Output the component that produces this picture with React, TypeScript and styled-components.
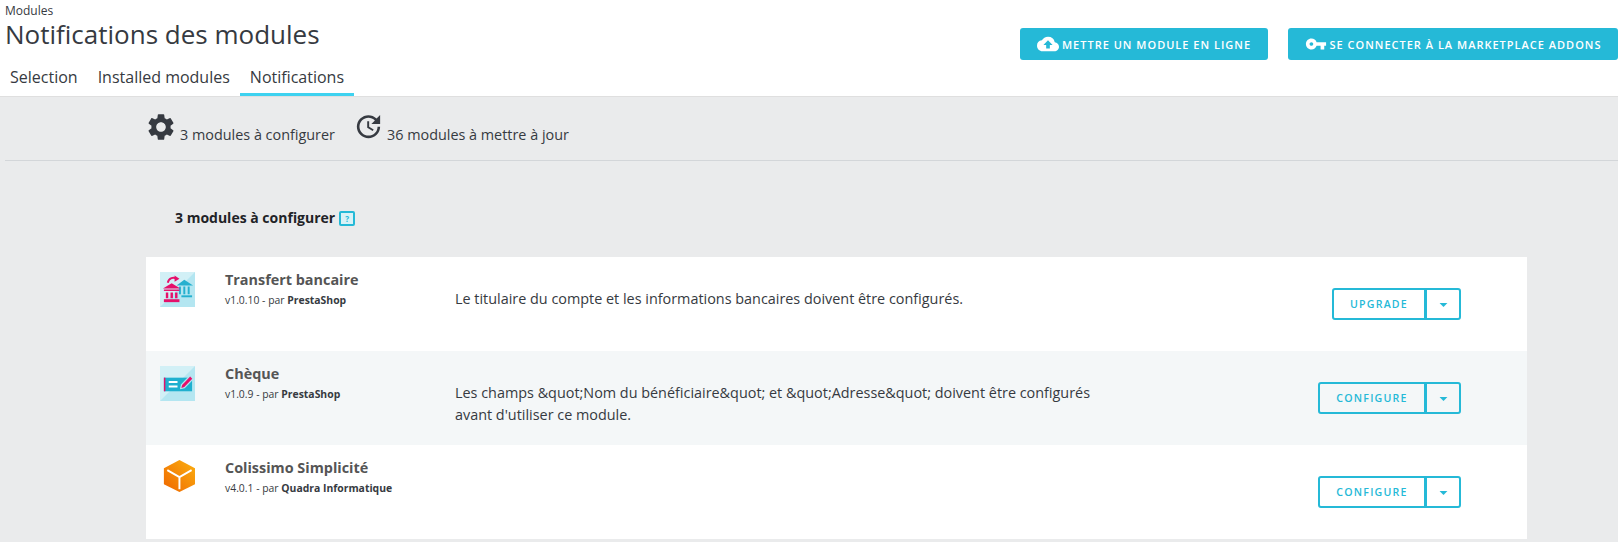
import React from "react";
import styled, { createGlobalStyle } from "styled-components";
import { MdCloudUpload, MdVpnKey, MdSettings, MdUpdate, MdArrowDropDown } from "react-icons/md";

const Global = createGlobalStyle`
  html, body { margin: 0; padding: 0; background: #eaebec; }
  body { font-family: "Open Sans", "Liberation Sans", sans-serif; color: #363a41; overflow: hidden; }
  * { box-sizing: border-box; }
`;

const Page = styled.div`
  width: 1618px;
  height: 542px;
  overflow: hidden;
`;

const Header = styled.header`
  height: 97px;
  background: #fff;
  border-bottom: 1px solid #dfdfdf;
  display: flex;
  justify-content: space-between;
`;

const HeaderLeft = styled.div`
  padding: 5px 0 0 5px;
  display: flex;
  flex-direction: column;
`;

const Crumb = styled.div`
  font-size: 12px;
  line-height: 12px;
  color: #363a41;
`;

const Title = styled.h1`
  margin: 0;
  font-size: 26px;
  line-height: 34px;
  font-weight: 400;
  color: #363a41;
`;

const Tabs = styled.nav`
  display: flex;
  margin: 8px 0 0 -5px;
`;

const Tab = styled.a<{ $active?: boolean }>`
  height: 37px;
  padding: 7px 10px 0;
  font-size: 16px;
  line-height: 22px;
  color: #363a41;
  border-bottom: 3px solid ${(p) => (p.$active ? "#3ed2f0" : "transparent")};
`;

const HeaderActions = styled.div`
  display: flex;
  gap: 20px;
  padding-top: 28px;
`;

const PrimaryButton = styled.button<{ $w: number }>`
  width: ${(p) => p.$w}px;
  height: 32px;
  border: 0;
  border-radius: 3px;
  background: #25b9d7;
  color: #fff;
  font-family: inherit;
  font-size: 11px;
  font-weight: 600;
  letter-spacing: 1px;
  text-transform: uppercase;
  display: flex;
  align-items: center;
  justify-content: center;
  gap: 3px;
  padding: 0;
  white-space: nowrap;
`;

const Summary = styled.div`
  margin-left: 5px;
  height: 64px;
  border-bottom: 1px solid #d3d6d9;
  padding: 14px 0 0 140px;
  display: flex;
  gap: 18px;
`;

const SummaryItem = styled.div`
  display: flex;
  align-items: flex-start;
  gap: 3px;
  font-size: 14.4px;
  color: #363a41;
`;

const SummaryLabel = styled.span`
  line-height: 20px;
  margin-top: 14px;
`;

const SectionTitle = styled.div`
  padding: 47px 0 0 175px;
  height: 96px;
  display: flex;
  align-items: flex-start;
  gap: 4px;
  font-size: 14px;
  font-weight: 700;
  line-height: 20px;
  color: #1f2327;
`;

const HelpBox = styled.span`
  width: 16px;
  height: 15px;
  margin-top: 3px;
  border: 2px solid #25b9d7;
  border-radius: 2px;
  background: #d9f2f7;
  color: #25b9d7;
  font-size: 8px;
  font-weight: 700;
  line-height: 11px;
  text-align: center;
`;

const Card = styled.section`
  margin-left: 146px;
  width: 1381px;
`;

const Row = styled.article<{ $shaded?: boolean }>`
  height: 94px;
  background: ${(p) => (p.$shaded ? "#f4f7f8" : "#fff")};
  display: grid;
  grid-template-columns: 65px 230px 1fr auto;
  padding: 15px 66px 0 14px;
`;

const LogoCell = styled.div`
  width: 35px;
  height: 35px;
  svg { display: block; }
`;

const Info = styled.div`
  display: flex;
  flex-direction: column;
  margin-top: -2px;
`;

const Name = styled.div`
  font-size: 14.4px;
  font-weight: 700;
  line-height: 19px;
  color: #555;
`;

const Version = styled.div`
  font-size: 10.4px;
  line-height: 14px;
  margin-top: 4px;
  color: #363a41;
  b { font-weight: 700; }
`;

const Desc = styled.p`
  margin: 16px 0 0;
  width: 680px;
  font-size: 14.4px;
  line-height: 22px;
  color: #363a41;
`;

const ButtonGroup = styled.div`
  display: flex;
  margin-top: 16px;
  height: 32px;
  border: 2px solid #25b9d7;
  border-radius: 3px;
  align-self: start;
`;

const GroupMain = styled.div<{ $w: number }>`
  width: ${(p) => p.$w}px;
  border-right: 3px solid #25b9d7;
  color: #25b9d7;
  font-size: 10.6px;
  font-weight: 600;
  letter-spacing: 1.2px;
  display: flex;
  align-items: center;
  justify-content: center;
  text-transform: uppercase;
`;

const GroupCaret = styled.div`
  width: 32px;
  color: #25b9d7;
  font-size: 19px;
  display: flex;
  align-items: center;
  justify-content: center;
`;

const BankLogo = () => (
  <svg width="35" height="35" viewBox="0 0 36 36">
    <rect width="36" height="36" fill="#d2f0f6" />
    <polygon points="36,0 36,36 0,36" fill="#b4e6f1" />
    <path d="M8 11 C9 6 14 5 17 7" fill="none" stroke="#e5106b" strokeWidth="2" />
    <polygon points="15,3.5 20,7 15,10" fill="#e5106b" />
    <polygon points="25,8 34,14 17,14" fill="#25b0cf" />
    <path d="M19.5 15h2v8h-2zM24 15h2v8h-2zM28.500 15h2v8h-2z" fill="#25b0cf" />
    <rect x="22" y="24" width="11" height="2" fill="#25b0cf" />
    <polygon points="12,11.500 21,17 3,17" fill="#e5106b" />
    <rect x="4" y="18" width="16" height="1.500" fill="#e5106b" />
    <path d="M6 21h2.500v6H6zM10.800 21h2.500v6h-2.500zM15.500 21H18v6h-2.500z" fill="#e5106b" />
    <rect x="4" y="28" width="16" height="3" fill="#e5106b" />
  </svg>
);

const CheckLogo = () => (
  <svg width="35" height="35" viewBox="0 0 36 36">
    <rect width="36" height="36" fill="#d2f0f6" />
    <polygon points="36,0 36,36 0,36" fill="#b4e6f1" />
    <rect x="4" y="12" width="29" height="14" fill="#1fb0cf" />
    <rect x="4" y="12" width="1.500" height="14" fill="#e5106b" />
    <path d="M9 15.500h9v2H9zM9 20h9v2H9z" fill="#fff" />
    <path d="M20.500 24 L21.500 19 L31 9 L35 13 L25.500 23 Z" fill="#b4e6f1" />
    <path d="M22 22.500 L22.800 19.500 L31 10.800 L33.200 13 L25 21.700 Z" fill="#e5106b" />
  </svg>
);

const BoxLogo = () => (
  <svg width="35" height="35" viewBox="0 0 36 36">
    <defs>
      <linearGradient id="boxg" x1="0" y1="1" x2="1" y2="0">
        <stop offset="0" stopColor="#ef6600" />
        <stop offset="1" stopColor="#fbb010" />
      </linearGradient>
    </defs>
    <polygon points="20,0 36,8.500 36,25 20,33 4,25 4,8.500" fill="url(#boxg)" />
    <path d="M7.500 10.500 L20 17.500 L32.500 10.500 M20 17.500 V30" fill="none" stroke="#fff" strokeWidth="2" />
  </svg>
);

const rows = [
  { logo: <BankLogo />, name: "Transfert bancaire", version: "v1.0.10", by: "PrestaShop", desc: ["Le titulaire du compte et les informations bancaires doivent être configurés."], action: "Upgrade", w: 93 },
  { logo: <CheckLogo />, name: "Chèque", version: "v1.0.9", by: "PrestaShop", desc: ["Les champs &quot;Nom du bénéficiaire&quot; et &quot;Adresse&quot; doivent être configurés", "avant d'utiliser ce module."], action: "Configure", w: 107 },
  { logo: <BoxLogo />, name: "Colissimo Simplicité", version: "v4.0.1", by: "Quadra Informatique", desc: [], action: "Configure", w: 107 },
];

export default function App() {
  return (
    <Page>
      <Global />
      <Header>
        <HeaderLeft>
          <Crumb>Modules</Crumb>
          <Title>Notifications des modules</Title>
          <Tabs>
            <Tab>Selection</Tab>
            <Tab>Installed modules</Tab>
            <Tab $active>Notifications</Tab>
          </Tabs>
        </HeaderLeft>
        <HeaderActions>
          <PrimaryButton $w={248}><MdCloudUpload size={22} />Mettre un module en ligne</PrimaryButton>
          <PrimaryButton $w={330}><MdVpnKey size={22} />Se connecter à la marketplace addons</PrimaryButton>
        </HeaderActions>
      </Header>
      <Summary>
        <SummaryItem><MdSettings size={32} /><SummaryLabel>3 modules à configurer</SummaryLabel></SummaryItem>
        <SummaryItem><MdUpdate size={31} /><SummaryLabel>36 modules à mettre à jour</SummaryLabel></SummaryItem>
      </Summary>
      <SectionTitle>3 modules à configurer <HelpBox>?</HelpBox></SectionTitle>
      <Card>
        {rows.map((r, i) => (
          <Row key={i} $shaded={i === 1}>
            <LogoCell>{r.logo}</LogoCell>
            <Info>
              <Name>{r.name}</Name>
              <Version>{r.version} - par <b>{r.by}</b></Version>
            </Info>
            <Desc>{r.desc.map((d, j) => (<React.Fragment key={j}>{d}{j < r.desc.length - 1 && <br />}</React.Fragment>))}</Desc>
            <ButtonGroup>
              <GroupMain $w={r.w}>{r.action}</GroupMain>
              <GroupCaret><MdArrowDropDown /></GroupCaret>
            </ButtonGroup>
          </Row>
        ))}
      </Card>
    </Page>
  );
}
